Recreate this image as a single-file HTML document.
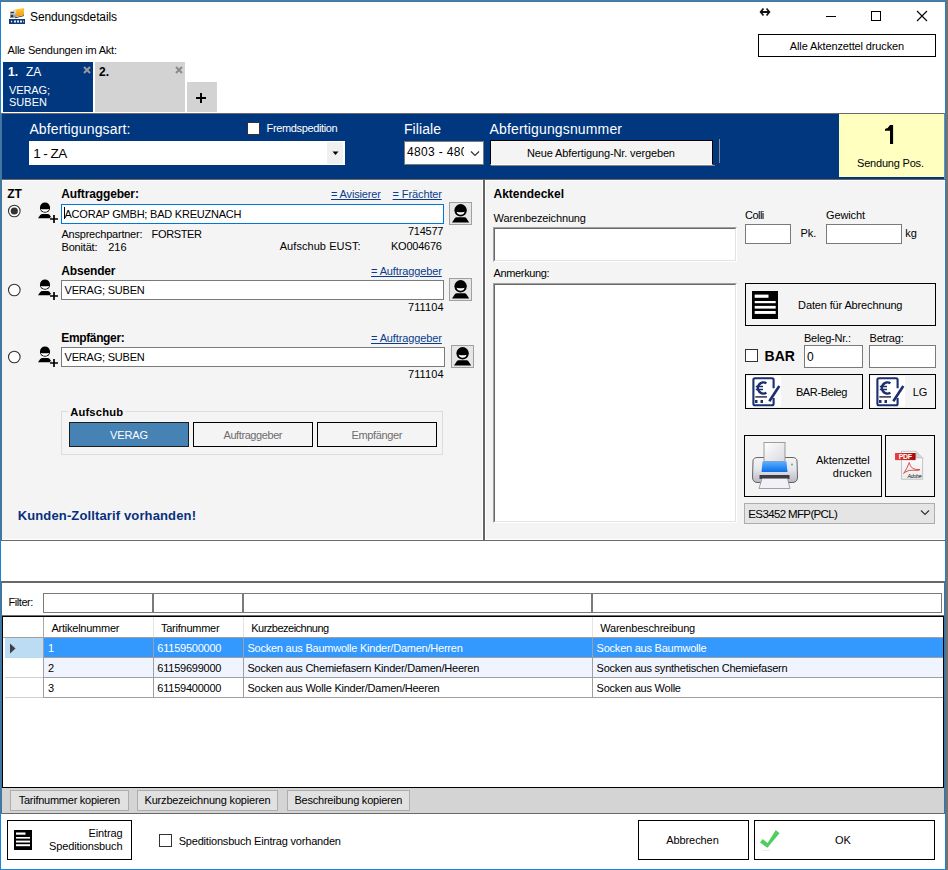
<!DOCTYPE html>
<html><head><meta charset="utf-8"><title>Sendungsdetails</title>
<style>
*{margin:0;padding:0;box-sizing:border-box}
html,body{width:948px;height:870px;overflow:hidden}
body{position:relative;background:#76716c;font-family:"Liberation Sans",sans-serif;font-size:10.6px;color:#000}
.a{position:absolute}
.t{position:absolute;white-space:pre;line-height:1}
svg{position:absolute;overflow:visible}
</style></head><body>
<div class="a" style="left:0px;top:1px;width:946px;height:869px;background:#fff;border:1px solid #1883d7"></div>
<svg style="left:9px;top:7px" width="17" height="18" viewBox="0 0 17 18">
<defs><linearGradient id="og" x1="0" y1="0" x2="0" y2="1"><stop offset="0" stop-color="#ffd040"/><stop offset="1" stop-color="#f59000"/></linearGradient>
<linearGradient id="gg" x1="0" y1="0" x2="0" y2="1"><stop offset="0" stop-color="#e8ecf0"/><stop offset="1" stop-color="#7a8590"/></linearGradient></defs>
<path d="M4 3 L15 1 L15 8 L6 10 Z" fill="url(#og)"/>
<path d="M1 4 L7 3.5 L7.5 10.5 L1 11 Z" fill="url(#gg)"/>
<path d="M1.5 5 L5 4.7 L5 6 L1.5 6.2Z" fill="#333"/>
<circle cx="3" cy="9" r="1.3" fill="#333"/>
<path d="M6 10.5 L15 8.2 L15 9 L6 11.2Z" fill="#222"/>
<rect x="0" y="12" width="16" height="5" fill="#0d3a7a"/>
<path d="M2 13.3 L3.5 14.5 L2 15.7Z M5 13.5h2v2h-2Z M8 13.5h2v2h-2Z M11 13.5h2v2h-2Z M14 13.3 L15 14.5 L14 15.7Z" fill="#fff" opacity="0.9"/>
</svg>
<div class="t" style="left:30.00px;top:11.00px;font-size:12px;font-weight:400;color:#000;letter-spacing:-0.124px;">Sendungsdetails</div>
<svg style="left:755px;top:5px" width="20" height="14" viewBox="755 5 20 14">
<path d="M761 12 H769" stroke="#111" stroke-width="2"/><path d="M762.9 9.2 L760.6 12 L762.9 14.8 M767.1 9.2 L769.4 12 L767.1 14.8" stroke="#111" stroke-width="1.7" fill="none" stroke-linecap="square"/></svg>
<div class="a" style="left:826px;top:16px;width:10px;height:1px;background:#000"></div>
<div class="a" style="left:871px;top:11px;width:10px;height:10px;border:1px solid #000"></div>
<svg style="left:916px;top:10px" width="12" height="12" viewBox="0 0 12 12">
<path d="M1 1 L11 11 M11 1 L1 11" stroke="#000" stroke-width="1.1"/></svg>
<div class="t" style="left:7.50px;top:45.00px;font-size:11px;font-weight:400;color:#000;letter-spacing:-0.202px;">Alle Sendungen im Akt:</div>
<div class="a" style="left:758px;top:34px;width:178px;height:23px;border:1px solid #000;background:#fff"></div>
<div class="t" style="left:789.80px;top:41.00px;font-size:11px;font-weight:400;color:#000;letter-spacing:-0.131px;">Alle Aktenzettel drucken</div>
<div class="a" style="left:3px;top:62px;width:90px;height:50px;background:#00377f"></div>
<div class="t" style="left:8.00px;top:66.00px;font-size:12px;font-weight:700;color:#fff;letter-spacing:0.000px;">1.</div>
<div class="t" style="left:26.00px;top:66.00px;font-size:12px;font-weight:400;color:#fff;letter-spacing:0.000px;">ZA</div>
<div class="t" style="left:9.00px;top:85.00px;font-size:11px;font-weight:400;color:#fff;letter-spacing:-0.116px;">VERAG;</div>
<div class="t" style="left:9.00px;top:97.00px;font-size:11px;font-weight:400;color:#fff;letter-spacing:0.023px;">SUBEN</div>
<svg style="left:83px;top:66px" width="8" height="8" viewBox="0 0 8 8"><path d="M1 1 L7 7 M7 1 L1 7" stroke="#9a9a9a" stroke-width="2"/></svg>
<div class="a" style="left:95px;top:62px;width:90px;height:50px;background:#d3d3d3"></div>
<div class="t" style="left:99.00px;top:66.00px;font-size:12px;font-weight:700;color:#000;letter-spacing:0.000px;">2.</div>
<svg style="left:175px;top:66px" width="8" height="8" viewBox="0 0 8 8"><path d="M1 1 L7 7 M7 1 L1 7" stroke="#8a8a8a" stroke-width="2"/></svg>
<div class="a" style="left:187px;top:82px;width:30px;height:30px;background:#d3d3d3"></div>
<div class="a" style="left:196px;top:97px;width:10px;height:2px;background:#000"></div>
<div class="a" style="left:200px;top:93px;width:2px;height:10px;background:#000"></div>
<div class="a" style="left:1px;top:113px;width:944px;height:67px;background:#00377f;border:1px solid #696969;border-right-color:#8a8a8a"></div>
<div class="t" style="left:29.40px;top:122.00px;font-size:14px;font-weight:400;color:#fff;letter-spacing:0.144px;">Abfertigungsart:</div>
<div class="a" style="left:247px;top:122px;width:13px;height:13px;background:#fff;border:1px solid #333"></div>
<div class="t" style="left:266.60px;top:123.00px;font-size:11px;font-weight:400;color:#fff;letter-spacing:-0.371px;">Fremdspedition</div>
<div class="a" style="left:29px;top:141px;width:316px;height:24px;background:#fff"></div>
<div class="a" style="left:327px;top:142px;width:16px;height:22px;background:#f0f0f0"></div>
<svg style="left:332px;top:151px" width="7" height="5" viewBox="0 0 7 5"><path d="M0.5 0.5 H6.5 L3.5 4Z" fill="#000"/></svg>
<div class="t" style="left:33.20px;top:147.00px;font-size:13.5px;font-weight:400;color:#000;letter-spacing:-0.553px;">1 - ZA</div>
<div class="t" style="left:404.00px;top:122.00px;font-size:14px;font-weight:400;color:#fff;letter-spacing:0.070px;">Filiale</div>
<div class="a" style="left:404px;top:141px;width:80px;height:24px;background:#fff;border:1px solid #7a7a7a"></div>
<div class="a" style="left:405px;top:142px;width:59px;height:22px;overflow:hidden"><div class="t" style="left:2px;top:4px;font-size:12px;letter-spacing:0.35px">4803 - 4803</div></div>
<svg style="left:470px;top:150px" width="10" height="7" viewBox="0 0 10 7"><path d="M1 1.5 L5 5.5 L9 1.5" stroke="#333" stroke-width="1.2" fill="none"/></svg>
<div class="t" style="left:489.60px;top:122.00px;font-size:14px;font-weight:400;color:#fff;letter-spacing:0.144px;">Abfertigungsnummer</div>
<div class="a" style="left:490px;top:140px;width:223px;height:25px;background:#f4f4f4;border:1px solid #000;border-bottom:1px solid #fff"></div>
<div class="a" style="left:491px;top:165px;width:224px;height:1px;background:#8a8580"></div>
<div class="t" style="left:527.00px;top:148.00px;font-size:11px;font-weight:400;color:#000;letter-spacing:-0.131px;">Neue Abfertigung-Nr. vergeben</div>
<div class="a" style="left:719px;top:139px;width:1px;height:24px;background:#8a8a8a"></div>
<div class="a" style="left:839px;top:114px;width:105px;height:63px;background:#ffffc0"></div>
<svg style="left:880px;top:120px" width="20" height="30" viewBox="880 120 20 30"><path d="M890 125 H893.1 V143.9 H890 V130.8 H885 V129 Q888.3 128.4 890 125Z" fill="#000"/></svg>
<div class="t" style="left:857.00px;top:158.00px;font-size:11px;font-weight:400;color:#000;letter-spacing:-0.193px;">Sendung Pos.</div>
<div class="a" style="left:1px;top:179px;width:944px;height:362px;background:#f4f4f4;border-top:1px solid #696969;border-bottom:1px solid #696969;border-left:1px solid #696969"></div>
<div class="a" style="left:2px;top:180px;width:942px;height:1px;background:#fff"></div>
<div class="a" style="left:2px;top:539px;width:942px;height:1px;background:#fff"></div>
<div class="a" style="left:482px;top:180px;width:1px;height:360px;background:#fff"></div>
<div class="a" style="left:483px;top:180px;width:2px;height:360px;background:#646464"></div>
<div class="a" style="left:485px;top:180px;width:1px;height:360px;background:#fff"></div>
<div class="a" style="left:944px;top:180px;width:1px;height:360px;background:#fff"></div>
<div class="t" style="left:7.20px;top:188.00px;font-size:12px;font-weight:700;color:#000;letter-spacing:0.000px;">ZT</div>
<div class="t" style="left:61.30px;top:188.00px;font-size:12px;font-weight:700;color:#000;letter-spacing:-0.145px;">Auftraggeber:</div>
<svg style="left:7px;top:204.3px" width="15" height="15" viewBox="0 0 15 15"><circle cx="7.3" cy="7" r="5.8" fill="#fff" stroke="#333" stroke-width="1.1"/><circle cx="7.3" cy="7" r="3.6" fill="#333"/></svg>
<svg style="left:37px;top:202px" width="22" height="22" viewBox="0 0 22 22">
<path d="M1 16.3 L3.3 13 Q4 12 5.5 12 H10.5 Q12 12 12.7 13 L15 16.3 Z" fill="#000"/>
<circle cx="8" cy="5.7" r="5.1" fill="#000"/>
<path d="M3.8 6.9 Q8 7.7 12.2 6.9 Q11.2 9.7 8 9.7 Q4.8 9.7 3.8 6.9Z" fill="#fff"/>
<path d="M17 13 V21 M13 17 H21" stroke="#f4f4f4" stroke-width="3.4"/>
<path d="M17 13 V21 M13 17 H21" stroke="#000" stroke-width="1.7"/>
</svg>
<div class="a" style="left:61px;top:204px;width:383px;height:20px;background:#fff;border:1px solid #0078d7"></div>
<div class="t" style="left:64.50px;top:209.00px;font-size:11px;font-weight:400;color:#000;letter-spacing:-0.223px;">ACORAP GMBH; BAD KREUZNACH</div>
<div class="a" style="left:449px;top:202px;width:23px;height:23px;background:#e6e6e6;border:1px solid #a0a0a0"></div>
<svg style="left:450px;top:203px" width="21" height="21" viewBox="0 0 21 21">
<circle cx="10.6" cy="7.3" r="6.2" fill="#000"/>
<path d="M6.6 8.7 Q10.6 9.7 14.6 8.7 Q13.8 11.7 10.6 11.7 Q7.4 11.7 6.6 8.7Z" fill="#fff"/>
<path d="M2 19.6 L5 15 Q5.5 14.2 6.5 14.2 H14.7 Q15.7 14.2 16.2 15 L19.2 19.6Z" fill="#000"/>
</svg>
<div class="t" style="left:408.00px;top:226.00px;font-size:11px;font-weight:400;color:#000;letter-spacing:-0.244px;">714577</div>
<div class="t" style="left:61.30px;top:265.00px;font-size:12px;font-weight:700;color:#000;letter-spacing:-0.166px;">Absender</div>
<svg style="left:7px;top:282.5px" width="15" height="15" viewBox="0 0 15 15"><circle cx="7.3" cy="7" r="5.8" fill="#fff" stroke="#333" stroke-width="1.1"/></svg>
<svg style="left:37px;top:279px" width="22" height="22" viewBox="0 0 22 22">
<path d="M1 16.3 L3.3 13 Q4 12 5.5 12 H10.5 Q12 12 12.7 13 L15 16.3 Z" fill="#000"/>
<circle cx="8" cy="5.7" r="5.1" fill="#000"/>
<path d="M3.8 6.9 Q8 7.7 12.2 6.9 Q11.2 9.7 8 9.7 Q4.8 9.7 3.8 6.9Z" fill="#fff"/>
<path d="M17 13 V21 M13 17 H21" stroke="#f4f4f4" stroke-width="3.4"/>
<path d="M17 13 V21 M13 17 H21" stroke="#000" stroke-width="1.7"/>
</svg>
<div class="a" style="left:61px;top:280px;width:383px;height:20px;background:#fff;border:1px solid #7a7a7a"></div>
<div class="t" style="left:64.50px;top:285.00px;font-size:11px;font-weight:400;color:#000;letter-spacing:-0.203px;">VERAG; SUBEN</div>
<div class="a" style="left:449px;top:278px;width:23px;height:23px;background:#e6e6e6;border:1px solid #a0a0a0"></div>
<svg style="left:450px;top:279px" width="21" height="21" viewBox="0 0 21 21">
<circle cx="10.6" cy="7.3" r="6.2" fill="#000"/>
<path d="M6.6 8.7 Q10.6 9.7 14.6 8.7 Q13.8 11.7 10.6 11.7 Q7.4 11.7 6.6 8.7Z" fill="#fff"/>
<path d="M2 19.6 L5 15 Q5.5 14.2 6.5 14.2 H14.7 Q15.7 14.2 16.2 15 L19.2 19.6Z" fill="#000"/>
</svg>
<div class="t" style="left:408.00px;top:302.00px;font-size:11px;font-weight:400;color:#000;letter-spacing:0.084px;">711104</div>
<div class="t" style="left:61.30px;top:332.00px;font-size:12px;font-weight:700;color:#000;letter-spacing:-0.365px;">Empfänger:</div>
<svg style="left:7px;top:349.5px" width="15" height="15" viewBox="0 0 15 15"><circle cx="7.3" cy="7" r="5.8" fill="#fff" stroke="#333" stroke-width="1.1"/></svg>
<svg style="left:37px;top:346px" width="22" height="22" viewBox="0 0 22 22">
<path d="M1 16.3 L3.3 13 Q4 12 5.5 12 H10.5 Q12 12 12.7 13 L15 16.3 Z" fill="#000"/>
<circle cx="8" cy="5.7" r="5.1" fill="#000"/>
<path d="M3.8 6.9 Q8 7.7 12.2 6.9 Q11.2 9.7 8 9.7 Q4.8 9.7 3.8 6.9Z" fill="#fff"/>
<path d="M17 13 V21 M13 17 H21" stroke="#f4f4f4" stroke-width="3.4"/>
<path d="M17 13 V21 M13 17 H21" stroke="#000" stroke-width="1.7"/>
</svg>
<div class="a" style="left:61px;top:347px;width:384px;height:20px;background:#fff;border:1px solid #7a7a7a"></div>
<div class="t" style="left:64.50px;top:352.00px;font-size:11px;font-weight:400;color:#000;letter-spacing:-0.203px;">VERAG; SUBEN</div>
<div class="a" style="left:451px;top:345px;width:23px;height:23px;background:#e6e6e6;border:1px solid #a0a0a0"></div>
<svg style="left:452px;top:346px" width="21" height="21" viewBox="0 0 21 21">
<circle cx="10.6" cy="7.3" r="6.2" fill="#000"/>
<path d="M6.6 8.7 Q10.6 9.7 14.6 8.7 Q13.8 11.7 10.6 11.7 Q7.4 11.7 6.6 8.7Z" fill="#fff"/>
<path d="M2 19.6 L5 15 Q5.5 14.2 6.5 14.2 H14.7 Q15.7 14.2 16.2 15 L19.2 19.6Z" fill="#000"/>
</svg>
<div class="t" style="left:408.00px;top:369.00px;font-size:11px;font-weight:400;color:#000;letter-spacing:0.084px;">711104</div>
<div class="a" style="left:64px;top:207px;width:1px;height:12px;background:#000"></div>
<div class="t" style="left:331.00px;top:189.00px;font-size:11px;font-weight:400;color:#0a3c8c;letter-spacing:-0.147px;text-decoration:underline">= Avisierer</div>
<div class="t" style="left:392.60px;top:189.00px;font-size:11px;font-weight:400;color:#0a3c8c;letter-spacing:-0.115px;text-decoration:underline">= Frächter</div>
<div class="t" style="left:371.00px;top:266.00px;font-size:11px;font-weight:400;color:#0a3c8c;letter-spacing:-0.114px;text-decoration:underline">= Auftraggeber</div>
<div class="t" style="left:371.00px;top:333.00px;font-size:11px;font-weight:400;color:#0a3c8c;letter-spacing:-0.114px;text-decoration:underline">= Auftraggeber</div>
<div class="t" style="left:61.50px;top:229.00px;font-size:11px;font-weight:400;color:#000;letter-spacing:-0.226px;">Ansprechpartner:</div>
<div class="t" style="left:151.60px;top:229.00px;font-size:11px;font-weight:400;color:#000;letter-spacing:-0.360px;">FORSTER</div>
<div class="t" style="left:61.50px;top:242.00px;font-size:11px;font-weight:400;color:#000;letter-spacing:-0.188px;">Bonität:</div>
<div class="t" style="left:108.20px;top:242.00px;font-size:11px;font-weight:400;color:#000;letter-spacing:0.000px;">216</div>
<div class="t" style="left:279.70px;top:241.00px;font-size:11px;font-weight:400;color:#000;letter-spacing:0.062px;">Aufschub EUST:</div>
<div class="t" style="left:391.00px;top:241.00px;font-size:11px;font-weight:400;color:#000;letter-spacing:-0.230px;">KO004676</div>
<div class="a" style="left:61px;top:411px;width:382px;height:44px;border:1px solid #dcdcdc"></div>
<div class="a" style="left:68px;top:405px;width:57px;height:10px;background:#f4f4f4"></div>
<div class="t" style="left:70.20px;top:407.00px;font-size:11.2px;font-weight:700;color:#000;letter-spacing:0.172px;">Aufschub</div>
<div class="a" style="left:69px;top:422px;width:120px;height:25px;background:#4682b4;border:1px solid #1e1e1e"></div>
<div class="t" style="left:110.00px;top:430.00px;font-size:11px;font-weight:400;color:#fff;letter-spacing:-0.129px;">VERAG</div>
<div class="a" style="left:193px;top:422px;width:120px;height:25px;background:#f4f4f4;border:1px solid #000"></div>
<div class="t" style="left:223.50px;top:430.00px;font-size:11px;font-weight:400;color:#6d6d6d;letter-spacing:-0.419px;">Auftraggeber</div>
<div class="a" style="left:317px;top:422px;width:120px;height:25px;background:#f4f4f4;border:1px solid #000"></div>
<div class="t" style="left:351.50px;top:430.00px;font-size:11px;font-weight:400;color:#6d6d6d;letter-spacing:-0.352px;">Empfänger</div>
<div class="t" style="left:17.70px;top:509.00px;font-size:13px;font-weight:700;color:#08307e;letter-spacing:0.135px;">Kunden-Zolltarif vorhanden!</div>
<div class="t" style="left:493.60px;top:188.00px;font-size:12px;font-weight:700;color:#000;letter-spacing:-0.030px;">Aktendeckel</div>
<div class="t" style="left:493.60px;top:213.00px;font-size:11px;font-weight:400;color:#000;letter-spacing:-0.133px;">Warenbezeichnung</div>
<div class="a" style="left:493px;top:227px;width:244px;height:35px;background:#fff;border-style:solid;border-width:1px;border-color:#a0a0a0 #fff #fff #a0a0a0"></div>
<div class="a" style="left:494px;top:228px;width:242px;height:33px;border-style:solid;border-width:1px;border-color:#696969 #e3e3e3 #e3e3e3 #696969"></div>
<div class="t" style="left:493.60px;top:268.00px;font-size:11px;font-weight:400;color:#000;letter-spacing:-0.368px;">Anmerkung:</div>
<div class="a" style="left:493px;top:283px;width:244px;height:240px;background:#fff;border-style:solid;border-width:1px;border-color:#a0a0a0 #fff #fff #a0a0a0"></div>
<div class="a" style="left:494px;top:284px;width:242px;height:238px;border-style:solid;border-width:1px;border-color:#696969 #e3e3e3 #e3e3e3 #696969"></div>
<div class="t" style="left:745.00px;top:210.00px;font-size:11px;font-weight:400;color:#000;letter-spacing:-0.527px;">Colli</div>
<div class="a" style="left:745px;top:224px;width:46px;height:20px;background:#fff;border:1px solid #7a7a7a"></div>
<div class="t" style="left:800.40px;top:228.00px;font-size:11px;font-weight:400;color:#000;letter-spacing:0.000px;">Pk.</div>
<div class="t" style="left:826.00px;top:210.00px;font-size:11px;font-weight:400;color:#000;letter-spacing:-0.125px;">Gewicht</div>
<div class="a" style="left:826px;top:224px;width:76px;height:20px;background:#fff;border:1px solid #7a7a7a"></div>
<div class="t" style="left:905.30px;top:228.00px;font-size:11px;font-weight:400;color:#000;letter-spacing:0.000px;">kg</div>
<div class="a" style="left:745px;top:283px;width:191px;height:43px;background:#f4f4f4;border:1px solid #000"></div>
<svg style="left:752px;top:291px" width="26" height="28" viewBox="0 0 26 28">
<rect x="0" y="0" width="26" height="28" fill="#000"/>
<rect x="2.7" y="3.6" width="13.8" height="3.2" fill="#fff"/>
<rect x="2.7" y="10" width="21" height="2.2" fill="#fff"/>
<rect x="2.7" y="14.9" width="21" height="2.7" fill="#fff"/>
<rect x="2.7" y="20" width="21" height="2.9" fill="#fff"/>
</svg>
<div class="t" style="left:798.10px;top:300.00px;font-size:11px;font-weight:400;color:#000;letter-spacing:-0.138px;">Daten für Abrechnung</div>
<div class="t" style="left:804.00px;top:333.00px;font-size:11px;font-weight:400;color:#000;letter-spacing:-0.214px;">Beleg-Nr.:</div>
<div class="t" style="left:869.60px;top:333.00px;font-size:11px;font-weight:400;color:#000;letter-spacing:-0.228px;">Betrag:</div>
<div class="a" style="left:745px;top:349px;width:13px;height:13px;background:#fff;border:1px solid #333"></div>
<div class="t" style="left:764.60px;top:349.00px;font-size:14px;font-weight:700;color:#000;letter-spacing:0.000px;">BAR</div>
<div class="a" style="left:804px;top:345px;width:59px;height:23px;background:#fff;border:1px solid #7a7a7a"></div>
<div class="t" style="left:807.00px;top:351.00px;font-size:12px;font-weight:400;color:#000;letter-spacing:0.000px;">0</div>
<div class="a" style="left:869px;top:345px;width:67px;height:23px;background:#fff;border:1px solid #7a7a7a"></div>
<div class="a" style="left:745px;top:374px;width:118px;height:35px;background:#f4f4f4;border:1px solid #000"></div>
<svg style="left:747px;top:376px" width="35" height="31" viewBox="0 0 35 31">
<rect x="0" y="0" width="34" height="30.5" fill="#fff"/>
<path d="M26.6 12.3 V3.8 Q26.6 2.3 25.1 2.3 H7.9 Q6.4 2.3 6.4 3.8 V27.8 Q6.4 29.3 7.9 29.3 H25.1 Q26.6 29.3 26.6 27.8 V22" fill="none" stroke="#1c2f6e" stroke-width="2.1"/>
<path d="M19.4 7.2 A5.6 5.6 0 1 0 19.4 16.8" fill="none" stroke="#1c2f6e" stroke-width="2.5"/>
<path d="M8.8 10.4 H16 M8.8 13.6 H16" stroke="#1c2f6e" stroke-width="1.5"/>
<path d="M8.3 20.9 H20" stroke="#3a3a5a" stroke-width="1.6"/>
<path d="M8 24 h2.5 v3 h-2.5Z M13.5 24 h2.5 v3 h-2.5Z" fill="#1c2f6e"/>
<path d="M22.3 25.3 L32.3 10" stroke="#1c2f6e" stroke-width="2.6"/>
</svg>
<div class="t" style="left:795.90px;top:387.00px;font-size:11px;font-weight:400;color:#000;letter-spacing:-0.353px;">BAR-Beleg</div>
<div class="a" style="left:869px;top:374px;width:67px;height:35px;background:#f4f4f4;border:1px solid #000"></div>
<svg style="left:871px;top:376px" width="35" height="31" viewBox="0 0 35 31">
<rect x="0" y="0" width="34" height="30.5" fill="#fff"/>
<path d="M26.6 12.3 V3.8 Q26.6 2.3 25.1 2.3 H7.9 Q6.4 2.3 6.4 3.8 V27.8 Q6.4 29.3 7.9 29.3 H25.1 Q26.6 29.3 26.6 27.8 V22" fill="none" stroke="#1c2f6e" stroke-width="2.1"/>
<path d="M19.4 7.2 A5.6 5.6 0 1 0 19.4 16.8" fill="none" stroke="#1c2f6e" stroke-width="2.5"/>
<path d="M8.8 10.4 H16 M8.8 13.6 H16" stroke="#1c2f6e" stroke-width="1.5"/>
<path d="M8.3 20.9 H20" stroke="#3a3a5a" stroke-width="1.6"/>
<path d="M8 24 h2.5 v3 h-2.5Z M13.5 24 h2.5 v3 h-2.5Z" fill="#1c2f6e"/>
<path d="M22.3 25.3 L32.3 10" stroke="#1c2f6e" stroke-width="2.6"/>
</svg>
<div class="t" style="left:912.66px;top:387.00px;font-size:11px;font-weight:400;color:#000;letter-spacing:0.000px;">LG</div>
<div class="a" style="left:744px;top:435px;width:138px;height:62px;background:#f4f4f4;border:1px solid #000"></div>
<svg style="left:750px;top:441px" width="50" height="50" viewBox="0 0 50 50">
<defs>
<linearGradient id="pbody" x1="0" y1="0" x2="0" y2="1"><stop offset="0" stop-color="#f4f4f8"/><stop offset="0.45" stop-color="#e6e6ee"/><stop offset="1" stop-color="#b8b8c4"/></linearGradient>
<linearGradient id="ppap" x1="0" y1="0" x2="1" y2="1"><stop offset="0" stop-color="#ffffff"/><stop offset="1" stop-color="#d8d8e0"/></linearGradient>
<linearGradient id="pblue" x1="0" y1="0" x2="0" y2="1"><stop offset="0" stop-color="#5ab0ff"/><stop offset="1" stop-color="#0a6ee8"/></linearGradient>
</defs>
<path d="M3 20 Q3 16.5 8 16.5 H42 Q47 16.5 47 20 L47.5 36 Q47.5 41 43 41.5 H7 Q2.5 41 2.5 36Z" fill="url(#pbody)" stroke="#555" stroke-width="0.9"/>
<rect x="14" y="1.5" width="21" height="19" fill="url(#ppap)" stroke="#888" stroke-width="0.8"/>
<path d="M12.5 20.5 H36.5 L37.5 31 H11.5Z" fill="url(#pblue)"/>
<path d="M9.5 34 H39.5 V38 H9.5Z" fill="#3c3c3c"/>
<path d="M12 37.5 H37.5 L40 47.5 H9Z" fill="#f2f2f6" stroke="#8a8a98" stroke-width="0.8"/>
<circle cx="42" cy="23.5" r="0.9" fill="#3cb85a"/>
</svg>
<div class="t" style="left:816.00px;top:455.00px;font-size:11px;font-weight:400;color:#000;letter-spacing:-0.082px;">Aktenzettel</div>
<div class="t" style="left:832.80px;top:468.00px;font-size:11px;font-weight:400;color:#000;letter-spacing:0.010px;">drucken</div>
<div class="a" style="left:885px;top:435px;width:50px;height:62px;background:#f4f4f4;border:1px solid #000"></div>
<svg style="left:894px;top:450px" width="30" height="31" viewBox="0 0 30 31">
<defs><linearGradient id="pdfr" x1="0" y1="0" x2="1" y2="0"><stop offset="0" stop-color="#f04040"/><stop offset="1" stop-color="#a00a0a"/></linearGradient>
<linearGradient id="pdfd" x1="0" y1="0" x2="0" y2="1"><stop offset="0" stop-color="#ffffff"/><stop offset="1" stop-color="#ececec"/></linearGradient></defs>
<path d="M7.5 1.3 H22 L28.6 7.9 V29.3 H7.5Z" fill="url(#pdfd)" stroke="#bdbdbd" stroke-width="0.9"/>
<path d="M22 1.3 V7.9 H28.6" fill="#d8d8d8" stroke="#bdbdbd" stroke-width="0.8"/>
<rect x="1" y="3" width="20.6" height="7.1" fill="url(#pdfr)"/>
<text x="11.3" y="9.1" font-family="Liberation Sans" font-size="7" font-weight="700" fill="#fff" text-anchor="middle" letter-spacing="-0.3">PDF</text>
<path d="M9.5 23.8 Q13.5 18 15.2 12.5 M15.2 12.5 Q16 16.5 18.5 18.2 Q21.5 20 26 19.6 Q24.5 21 20 20.2 Q14.5 19.5 10.5 22.5" fill="none" stroke="#d42828" stroke-width="0.8"/>
<text x="20.5" y="28.3" font-family="Liberation Sans" font-size="5.2" font-style="italic" fill="#111" text-anchor="middle" letter-spacing="-0.2">Adobe</text>
</svg>
<div class="a" style="left:744px;top:503px;width:191px;height:21px;background:#e5e5e5;border:1px solid #adadad"></div>
<div class="t" style="left:748.30px;top:509.00px;font-size:11.5px;font-weight:400;color:#000;letter-spacing:-0.631px;">ES3452 MFP(PCL)</div>
<svg style="left:920px;top:509px" width="10" height="7" viewBox="0 0 10 7"><path d="M1 1.5 L5 5.5 L9 1.5" stroke="#333" stroke-width="1.2" fill="none"/></svg>
<div class="a" style="left:1px;top:581px;width:944px;height:233px;background:#fff;border-style:solid;border-color:#696969;border-width:2px 1px 1px 1px"></div>
<div class="t" style="left:8.60px;top:597.00px;font-size:11px;font-weight:400;color:#000;letter-spacing:-0.450px;">Filter:</div>
<div class="a" style="left:43px;top:593px;width:110px;height:20px;background:#fff;border:1px solid #7a7a7a"></div>
<div class="a" style="left:153px;top:593px;width:90px;height:20px;background:#fff;border:1px solid #7a7a7a"></div>
<div class="a" style="left:243px;top:593px;width:349px;height:20px;background:#fff;border:1px solid #7a7a7a"></div>
<div class="a" style="left:592px;top:593px;width:350px;height:20px;background:#fff;border:1px solid #7a7a7a"></div>
<div class="a" style="left:2px;top:616px;width:942px;height:172px;background:#fff;border:1px solid #000"></div>
<div class="a" style="left:2px;top:615px;width:942px;height:1px;background:#707070"></div>
<div class="a" style="left:43px;top:617px;width:1px;height:20px;background:#a8a8a8"></div>
<div class="a" style="left:153px;top:617px;width:1px;height:20px;background:#e4e4e4"></div>
<div class="a" style="left:243px;top:617px;width:1px;height:20px;background:#e4e4e4"></div>
<div class="a" style="left:592px;top:617px;width:1px;height:20px;background:#e4e4e4"></div>
<div class="a" style="left:3px;top:637px;width:940px;height:1px;background:#a0a0a0"></div>
<div class="t" style="left:51.50px;top:623.00px;font-size:11px;font-weight:400;color:#000;letter-spacing:-0.242px;">Artikelnummer</div>
<div class="t" style="left:161.00px;top:623.00px;font-size:11px;font-weight:400;color:#000;letter-spacing:-0.252px;">Tarifnummer</div>
<div class="t" style="left:251.20px;top:623.00px;font-size:11px;font-weight:400;color:#000;letter-spacing:-0.501px;">Kurzbezeichnung</div>
<div class="t" style="left:600.20px;top:623.00px;font-size:11px;font-weight:400;color:#000;letter-spacing:-0.190px;">Warenbeschreibung</div>
<div class="a" style="left:5px;top:638px;width:38px;height:20px;background:#bcdcf4"></div>
<div class="a" style="left:43px;top:638px;width:900px;height:19px;background:#3399ff"></div>
<div class="a" style="left:43px;top:657px;width:900px;height:1px;background:#a0a0a0"></div>
<div class="a" style="left:43px;top:638px;width:1px;height:20px;background:#a0a0a0"></div>
<div class="a" style="left:153px;top:638px;width:1px;height:20px;background:#a0a0a0"></div>
<div class="a" style="left:243px;top:638px;width:1px;height:20px;background:#a0a0a0"></div>
<div class="a" style="left:592px;top:638px;width:1px;height:20px;background:#a0a0a0"></div>
<div class="t" style="left:48.00px;top:643.00px;font-size:11px;font-weight:400;color:#fff;letter-spacing:-0.230px;">1</div>
<div class="t" style="left:157.30px;top:643.00px;font-size:11px;font-weight:400;color:#fff;letter-spacing:-0.230px;">61159500000</div>
<div class="t" style="left:247.40px;top:643.00px;font-size:11px;font-weight:400;color:#fff;letter-spacing:-0.230px;">Socken aus Baumwolle Kinder/Damen/Herren</div>
<div class="t" style="left:596.60px;top:643.00px;font-size:11px;font-weight:400;color:#fff;letter-spacing:-0.230px;">Socken aus Baumwolle</div>
<div class="a" style="left:43px;top:658px;width:900px;height:19px;background:#f0f4fe"></div>
<div class="a" style="left:43px;top:677px;width:900px;height:1px;background:#a0a0a0"></div>
<div class="a" style="left:5px;top:677px;width:38px;height:1px;background:#d0d0d0"></div>
<div class="a" style="left:43px;top:658px;width:1px;height:20px;background:#a0a0a0"></div>
<div class="a" style="left:153px;top:658px;width:1px;height:20px;background:#a0a0a0"></div>
<div class="a" style="left:243px;top:658px;width:1px;height:20px;background:#a0a0a0"></div>
<div class="a" style="left:592px;top:658px;width:1px;height:20px;background:#a0a0a0"></div>
<div class="t" style="left:48.00px;top:663.00px;font-size:11px;font-weight:400;color:#000;letter-spacing:-0.230px;">2</div>
<div class="t" style="left:157.30px;top:663.00px;font-size:11px;font-weight:400;color:#000;letter-spacing:-0.230px;">61159699000</div>
<div class="t" style="left:247.40px;top:663.00px;font-size:11px;font-weight:400;color:#000;letter-spacing:-0.230px;">Socken aus Chemiefasern Kinder/Damen/Heeren</div>
<div class="t" style="left:596.60px;top:663.00px;font-size:11px;font-weight:400;color:#000;letter-spacing:-0.230px;">Socken aus synthetischen Chemiefasern</div>
<div class="a" style="left:43px;top:697px;width:900px;height:1px;background:#a0a0a0"></div>
<div class="a" style="left:5px;top:697px;width:38px;height:1px;background:#d0d0d0"></div>
<div class="a" style="left:43px;top:678px;width:1px;height:20px;background:#a0a0a0"></div>
<div class="a" style="left:153px;top:678px;width:1px;height:20px;background:#a0a0a0"></div>
<div class="a" style="left:243px;top:678px;width:1px;height:20px;background:#a0a0a0"></div>
<div class="a" style="left:592px;top:678px;width:1px;height:20px;background:#a0a0a0"></div>
<div class="t" style="left:48.00px;top:683.00px;font-size:11px;font-weight:400;color:#000;letter-spacing:-0.230px;">3</div>
<div class="t" style="left:157.30px;top:683.00px;font-size:11px;font-weight:400;color:#000;letter-spacing:-0.230px;">61159400000</div>
<div class="t" style="left:247.40px;top:683.00px;font-size:11px;font-weight:400;color:#000;letter-spacing:-0.230px;">Socken aus Wolle Kinder/Damen/Heeren</div>
<div class="t" style="left:596.60px;top:683.00px;font-size:11px;font-weight:400;color:#000;letter-spacing:-0.230px;">Socken aus Wolle</div>
<svg style="left:9px;top:643px" width="8" height="12" viewBox="0 0 8 12"><path d="M1 0.5 L6.5 5.5 L1 10.5Z" fill="#404040"/></svg>
<div class="a" style="left:2px;top:788px;width:942px;height:25px;background:#d4d4d4"></div>
<div class="a" style="left:10px;top:790px;width:119px;height:21px;background:#e1e1e1;border:1px solid #adadad"></div>
<div class="t" style="left:18.75px;top:795.00px;font-size:11px;font-weight:400;color:#000;letter-spacing:-0.257px;">Tarifnummer kopieren</div>
<div class="a" style="left:137px;top:790px;width:141px;height:21px;background:#e1e1e1;border:1px solid #adadad"></div>
<div class="t" style="left:144.50px;top:795.00px;font-size:11px;font-weight:400;color:#000;letter-spacing:-0.185px;">Kurzbezeichnung kopieren</div>
<div class="a" style="left:287px;top:790px;width:123px;height:21px;background:#e1e1e1;border:1px solid #adadad"></div>
<div class="t" style="left:294.50px;top:795.00px;font-size:11px;font-weight:400;color:#000;letter-spacing:-0.227px;">Beschreibung kopieren</div>
<div class="a" style="left:7px;top:820px;width:125px;height:40px;background:#fff;border:1px solid #000"></div>
<svg style="left:14px;top:830px" width="18" height="20" viewBox="0 0 18 20">
<rect x="0" y="0" width="18" height="20" fill="#000"/>
<rect x="2" y="2.5" width="9.5" height="2.2" fill="#fff"/>
<rect x="2" y="7" width="14" height="1.6" fill="#fff"/>
<rect x="2" y="10.6" width="14" height="1.9" fill="#fff"/>
<rect x="2" y="14.2" width="14" height="2" fill="#fff"/>
</svg>
<div class="t" style="left:88.50px;top:828.00px;font-size:11px;font-weight:400;color:#000;letter-spacing:-0.143px;">Eintrag</div>
<div class="t" style="left:49.00px;top:841.00px;font-size:11px;font-weight:400;color:#000;letter-spacing:-0.133px;">Speditionsbuch</div>
<div class="a" style="left:159px;top:834px;width:13px;height:13px;background:#fff;border:1px solid #333"></div>
<div class="t" style="left:178.70px;top:836.00px;font-size:11px;font-weight:400;color:#000;letter-spacing:-0.190px;">Speditionsbuch Eintrag vorhanden</div>
<div class="a" style="left:638px;top:820px;width:111px;height:40px;background:#fff;border:1px solid #000"></div>
<div class="t" style="left:666.20px;top:835.00px;font-size:11px;font-weight:400;color:#000;letter-spacing:-0.077px;">Abbrechen</div>
<div class="a" style="left:754px;top:820px;width:181px;height:40px;background:#fff;border:1px solid #000"></div>
<svg style="left:755px;top:825px" width="30" height="30" viewBox="755 825 30 30"><path d="M760 842.5 L762.7 839.1 L767.6 843 L775.8 830.1 L779.5 833.3 L767.4 847.8Z" fill="#4fcf5f"/><path d="M763 850.5 H770" stroke="#ddd" stroke-width="0.6"/></svg>
<div class="t" style="left:835.05px;top:835.00px;font-size:11px;font-weight:400;color:#000;letter-spacing:0.000px;">OK</div>
</body></html>
